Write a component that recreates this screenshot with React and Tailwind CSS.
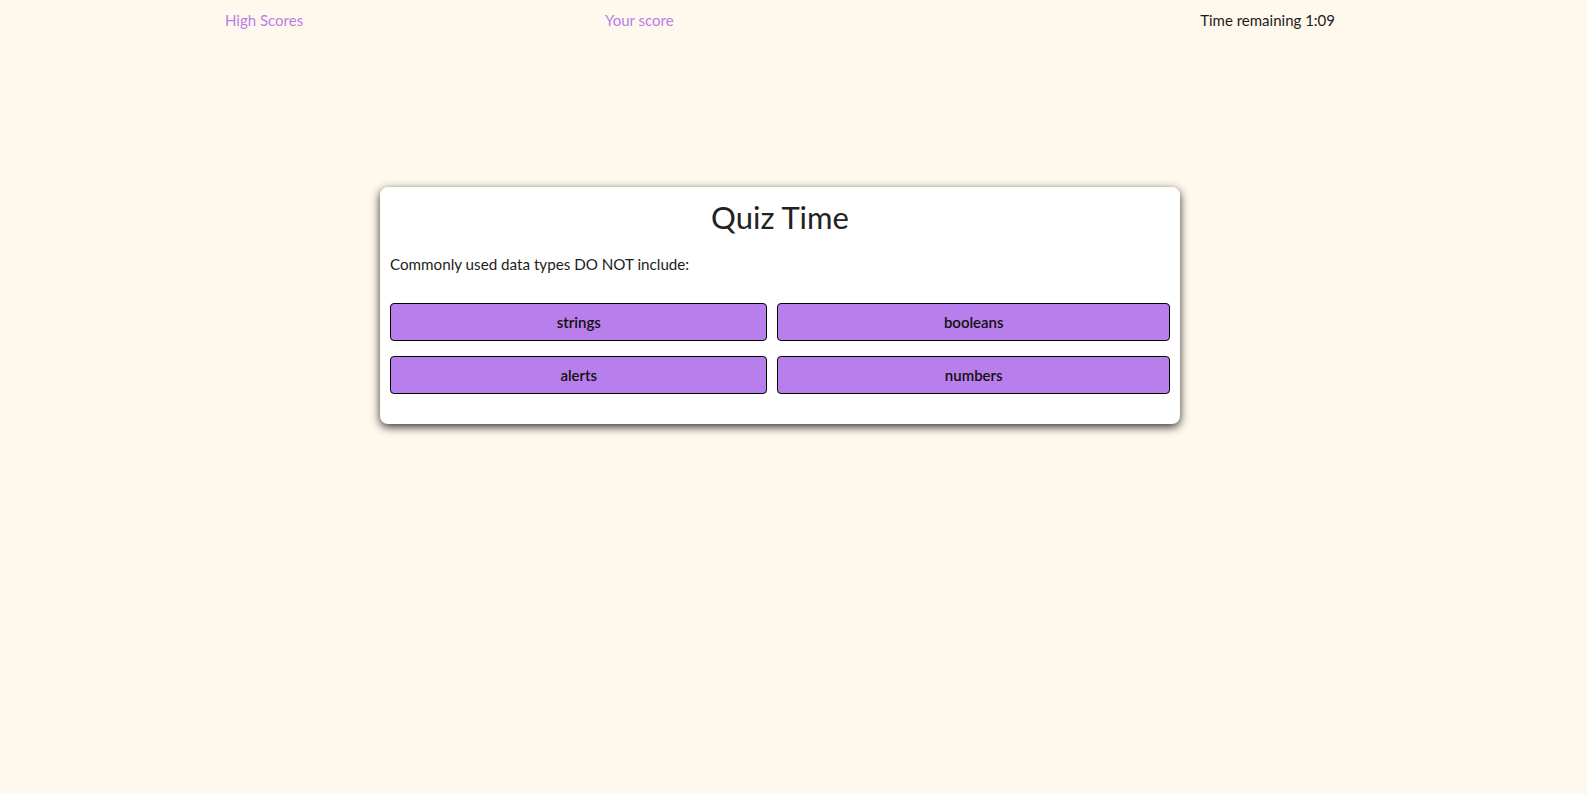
import React from "react";

const answers = ["strings", "booleans", "alerts", "numbers"];

const App = () => {
  return (
    <div
      className="min-h-screen w-full bg-[#fff8ec] pr-[27px] text-[#1c1c1c]"
      style={{ fontFamily: '"Gill Sans", Lato, "Noto Sans", sans-serif' }}
    >
      <header className="mx-auto grid h-10 max-w-[1110px] grid-cols-3 items-center text-[15px]">
        <a href="#" className="text-[#b87eeb]">
          High Scores
        </a>
        <a href="#" className="pl-[10px] text-[#b87eeb]">
          Your score
        </a>
        <p className="text-right">Time remaining 1:09</p>
      </header>

      <main className="mx-auto mt-[147px] w-[800px] rounded-lg bg-white px-[10px] pt-[10px] pb-[30px] shadow-[0_3px_10px_rgba(0,0,0,0.8)]">
        <h1 className="text-center text-[31px] leading-[40px] text-[#222]">Quiz Time</h1>
        <p className="mt-[15px] text-[15.2px] leading-6">
          Commonly used data types DO NOT include:
        </p>
        <div className="mt-[27px] grid grid-cols-[377fr_392fr] gap-x-[10px] gap-y-[15px]">
          {answers.map((answer) => (
            <button
              key={answer}
              className="h-[38px] rounded border border-black bg-[#b87eeb] text-[15px] font-semibold text-[#111]"
            >
              {answer}
            </button>
          ))}
        </div>
      </main>
    </div>
  );
};

export default App;
